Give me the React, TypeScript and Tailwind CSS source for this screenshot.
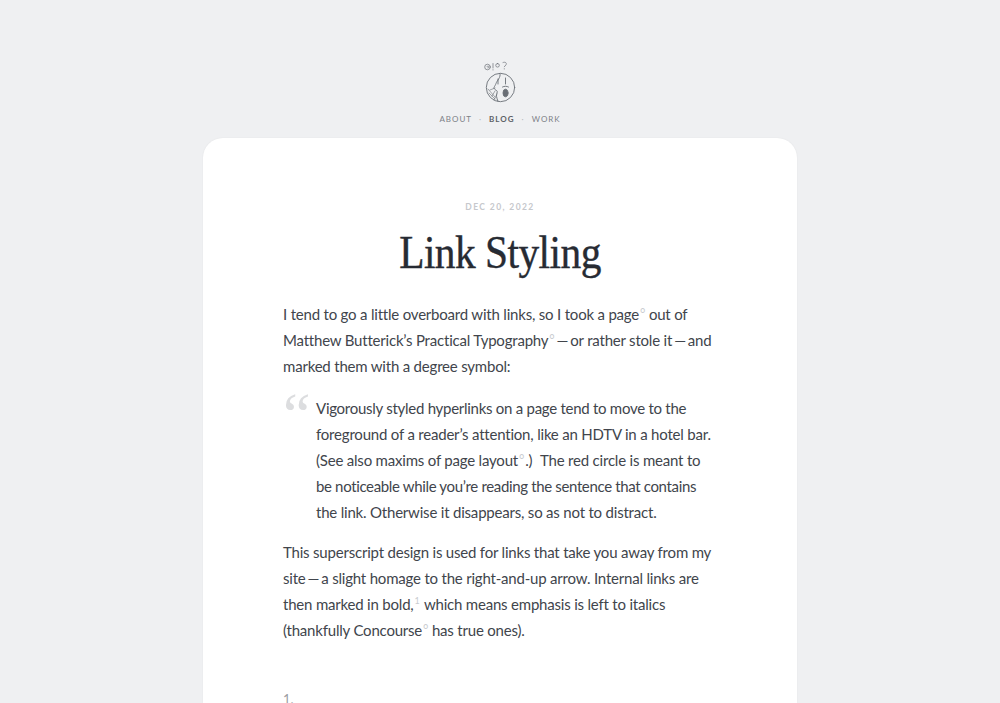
function Logo() {
  return (
    <svg width="36" height="44" viewBox="0 0 36 44" fill="none" stroke="#6a6f76" strokeWidth="0.9" strokeLinecap="round">
      {/* face */}
      <circle cx="18.5" cy="27.5" r="14.2" />
      <path d="M18 13.5c1 4-3 7-4 10s-3 4-1.500 5.500 3.500 1.500 2.500 4-.5 4 1 8.500" />
      <path d="M7 33l6 6M6 29l7 8M10 36l3-5M12 40l3-6M8 30l5-2" strokeWidth="0.6" />
      <path d="M16 19v5M23.500 18v6" />
      <ellipse cx="23.500" cy="33" rx="2.500" ry="3.800" fill="#6a6f76" />
      <path d="M20.500 27c2-1 4-1 6 0" />
      {/* thought marks */}
      <circle cx="5.500" cy="7" r="2.800" strokeWidth="0.7" />
      <path d="M5 6.500a1 1 0 1 1 .8 1.500M11 3.500v4.500M11 9.700v.3M15.500 3.500a1.800 1.800 0 1 1 .1 3.600 1.800 1.800 0 1 1-.1-3.600zM21 2.500c2.500-1 4 .5 3 2.300l-1.700 2M22.300 8.700v.3" strokeWidth="0.7" />
    </svg>
  );
}

function Deg() {
  return <span className="text-[13px] leading-none text-[#c9ccd0] ml-[1px] align-[2px]">°</span>;
}

function Dash() {
  return <span className="mx-[2px]">—</span>;
}

function Para({ children, className = "" }: { children: React.ReactNode; className?: string }) {
  return <p className={`text-[15px] tracking-[-0.2px] leading-[26px] whitespace-nowrap ${className}`}>{children}</p>;
}

export default function App() {
  return (
    <div className="h-[703px] overflow-hidden bg-[#eff0f2] font-['Lato',sans-serif] text-[#41454c] antialiased">
      {/* Header */}
      <header className="flex flex-col items-center pt-[60px] h-[138px]">
        <Logo />
        <nav className="flex items-center mt-[9px] text-[8px] leading-[12px] tracking-[1px] text-[#7d8187]">
          <span>ABOUT</span>
          <span className="mx-[7px] text-[#b5b8bc]">·</span>
          <span className="font-bold text-[#5d6167]">BLOG</span>
          <span className="mx-[7px] text-[#b5b8bc]">·</span>
          <span>WORK</span>
        </nav>
      </header>

      {/* Card */}
      <main className="mx-auto w-[594px] h-[565px] rounded-t-[20px] bg-white px-[80px] overflow-hidden shadow-[0_0_2px_rgba(0,0,0,0.06)]">
        <div className="pt-[62px] text-center text-[8.5px] leading-[14px] tracking-[1.4px] font-bold text-[#c6c8cc]">DEC 20, 2022</div>
        <h1 className="mt-[8px] text-center font-['Liberation_Serif',serif] text-[47px] leading-[60px] tracking-[-0.6px] text-[#272b33] scale-x-[0.88] [-webkit-text-stroke:0.4px_#272b33]">Link Styling</h1>

        <Para className="mt-[19px]">
          I tend to go a little overboard with links, so I took a page<Deg /> out of<br />
          Matthew Butterick’s Practical Typography<Deg /><Dash />or rather stole it<Dash />and<br />
          marked them with a degree symbol:
        </Para>

        <div className="relative mt-[16px] pl-[33px]">
          <span className="absolute left-0 top-[-12px] font-['Liberation_Serif',serif] text-[62px] leading-[62px] text-[#dcdddf]">“</span>
          <Para>
            <span className="tracking-[-0.27px]">Vigorously styled hyperlinks on a page tend to move to the</span><br />
            foreground of a reader’s attention, like an HDTV in a hotel bar.<br />
            (See also maxims of page layout<Deg /><span className="ml-[1px]">.) </span><span className="ml-[4px]">The red circle is meant to</span><br />
            <span className="tracking-[-0.35px]">be noticeable while you’re reading the sentence that contains</span><br />
            the link. Otherwise it disappears, so as not to distract.
          </Para>
        </div>

        <Para className="mt-[14px]">
          This superscript design is used for links that take you away from my<br />
          site<Dash />a slight homage to the right-and-up arrow. Internal links are<br />
          then marked in bold,<span className="text-[9px] leading-none text-[#c9ccd0] ml-[1px] mr-[1px] align-[6px]">1</span> which means emphasis is left to italics<br />
          (thankfully Concourse<Deg /> has true ones).
        </Para>

        <div className="mt-[46px] text-[13px] leading-[20px] text-[#9a9da2]">1.</div>
      </main>
    </div>
  );
}
